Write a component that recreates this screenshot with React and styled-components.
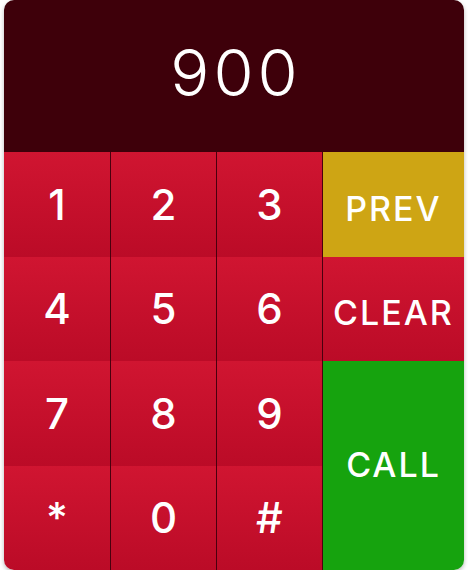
import React from "react";
import styled, { createGlobalStyle, css } from "styled-components";

const Global = createGlobalStyle`
  html, body { margin: 0; padding: 0; background: #ffffff; }
  body { font-family: "Inter", "Liberation Sans", sans-serif; }
`;

const Phone = styled.div`
  width: 460px;
  height: 570px;
  margin: 0 4px;
  border-radius: 10px;
  overflow: hidden;
  box-shadow: 0 2px 4px rgba(0, 0, 0, 0.28);
  display: flex;
  flex-direction: column;
`;

const Display = styled.div`
  height: 152px;
  flex: none;
  background: #3e000a;
  color: #ffffff;
  display: flex;
  align-items: center;
  justify-content: center;
  font-size: 65px;
  font-weight: 300;
  letter-spacing: 4px;
  padding: 0 0 8px 4px;
  box-sizing: border-box;
`;

const Pad = styled.div`
  flex: 1;
  display: grid;
  grid-template-columns: 106px 106px 106px 1fr;
  grid-template-rows: repeat(4, 1fr);
`;

const variants = {
  red: css`background: linear-gradient(#d01531, #bb0b27);`,
  gold: css`background: #cea514;`,
  green: css`background: #16a30e;`,
};

const Key = styled.div`
  display: flex;
  align-items: center;
  justify-content: center;
  color: #ffffff;
  font-size: ${(p) => (p.$label ? "34px" : "42px")};
  font-weight: 500;
  letter-spacing: ${(p) => (p.$label ? "2px" : "0")};
  padding-top: ${(p) => p.$drop || 0}px;
  padding-bottom: ${(p) => p.$lift || 0}px;
  box-sizing: border-box;
  border-left: ${(p) => (p.$first ? "none" : "1px solid #4a000e")};
  grid-row: ${(p) => (p.$span ? `span ${p.$span}` : "auto")};
  ${(p) => variants[p.$tone || "red"]}
`;

const rows = [
  ["1", "2", "3"],
  ["4", "5", "6"],
  ["7", "8", "9"],
  ["*", "0", "#"],
];

const side = {
  0: { text: "PREV", tone: "gold", drop: 8 },
  1: { text: "CLEAR", tone: "red", drop: 8 },
  2: { text: "CALL", tone: "green", span: 2, lift: 3 },
};

export default function App() {
  return (
    <>
      <Global />
      <Phone>
        <Display>900</Display>
        <Pad>
          {rows.map((r, i) => (
            <React.Fragment key={i}>
              {r.map((d, j) => (
                <Key key={d} $first={j === 0}>{d}</Key>
              ))}
              {side[i] && (
                <Key
                  $label
                  $tone={side[i].tone}
                  $span={side[i].span}
                  $drop={side[i].drop}
                  $lift={side[i].lift}
                >
                  {side[i].text}
                </Key>
              )}
            </React.Fragment>
          ))}
        </Pad>
      </Phone>
    </>
  );
}
